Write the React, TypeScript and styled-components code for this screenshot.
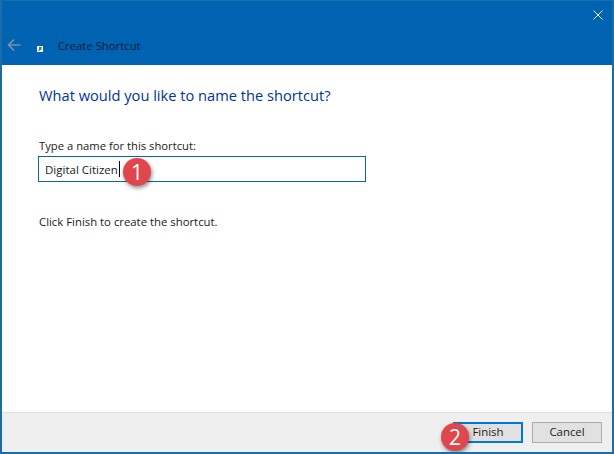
import React from "react";
import styled, { createGlobalStyle } from "styled-components";

const Global = createGlobalStyle`
  html, body { margin: 0; padding: 0; background: #fff; }
  #root { width: 614px; height: 454px; }
`;

const Window = styled.div`
  position: relative;
  box-sizing: border-box;
  width: 614px;
  height: 454px;
  display: flex;
  flex-direction: column;
  border: solid #1a6ea8;
  border-width: 1px 2px 2px 2px;
  font-family: "Open Sans", "Noto Sans", sans-serif;
  font-size: 11px;
  color: #1a1a1a;
  overflow: hidden;
`;

const Header = styled.header`
  height: 64px;
  flex: none;
  background: #0063b1;
  display: flex;
  flex-direction: column;
  justify-content: space-between;
`;

const CloseRow = styled.div`
  display: flex;
  justify-content: flex-end;
  padding: 9px 9px 0 0;
`;

const TitleRow = styled.div`
  display: flex;
  align-items: center;
  height: 20px;
  padding: 0 0 10px 4px;
`;

const BackIcon = styled.svg`
  width: 16px;
  height: 14px;
  flex: none;
`;

const AppIcon = styled.svg`
  width: 6px;
  height: 6px;
  flex: none;
  margin: 8px 0 0 15px;
`;

const Title = styled.span`
  margin-left: 15px;
  font-size: 11.3px;
  color: #0c1a33;
`;

const Body = styled.main`
  flex: 1;
  background: #fff;
  padding: 20px 0 0 37px;
  display: flex;
  flex-direction: column;
`;

const Heading = styled.h1`
  margin: 0;
  font-size: 14.65px;
  font-weight: 400;
  line-height: 20px;
  color: #003399;
`;

const FieldLabel = styled.label`
  margin-top: 33px;
  line-height: 16px;
  font-size: 11.25px;
`;

const NameBox = styled.div`
  box-sizing: border-box;
  width: 328px;
  height: 26px;
  margin: 2px 0 0 -1px;
  border: 1px solid #0b6a94;
  padding-left: 6px;
  display: flex;
  align-items: center;
  font-size: 11.5px;
`;

const Caret = styled.span`
  width: 1px;
  height: 16px;
  margin-left: 1px;
  background: #000;
`;

const Hint = styled.p`
  margin: 32px 0 0;
  line-height: 16px;
  font-size: 11.35px;
`;

const Footer = styled.footer`
  height: 40px;
  flex: none;
  box-sizing: border-box;
  background: #efefef;
  border-top: 1px solid #dfdfdf;
  display: flex;
  justify-content: flex-end;
  align-items: flex-start;
  gap: 9px;
  padding: 9px 10px 0 0;
`;

const Button = styled.button<{ $primary?: boolean }>`
  box-sizing: border-box;
  width: 70px;
  height: 21px;
  padding: 0 0 2px;
  background: #e1e1e1;
  border: ${(p) => (p.$primary ? "2px solid #0078d7" : "1px solid #adadad")};
  font: inherit;
  font-size: 11.4px;
  color: #1a1a1a;
`;

const Badge = styled.div<{ $x: number; $y: number }>`
  position: absolute;
  left: ${(p) => p.$x}px;
  top: ${(p) => p.$y}px;
  width: 28px;
  height: 28px;
  border-radius: 50%;
  background: #e0474c;
  box-shadow: 1px 2px 4px rgba(0, 0, 0, 0.45);
  color: #fff;
  font-family: "Open Sans", sans-serif;
  font-size: 21px;
  line-height: 28px;
  text-align: center;
`;

export default function App() {
  return (
    <>
      <Global />
      <Window>
        <Header>
          <CloseRow>
            <svg width="10" height="10" viewBox="0 0 10 10">
              <path d="M0.5 0.5 L9.5 9.5 M9.5 0.5 L0.5 9.5" stroke="#e8f2fa" strokeWidth="1" fill="none" />
            </svg>
          </CloseRow>
          <TitleRow>
            <BackIcon viewBox="0 0 16 14">
              <path d="M14.5 7 H3 M8 1.5 L2.5 7 L8 12.5" stroke="#7a8fa8" strokeWidth="1.7" fill="none" />
            </BackIcon>
            <AppIcon viewBox="0 0 6 6">
              <rect width="6" height="6" fill="#f4f8fb" />
              <path d="M2 1 H4.5 V3.5 H2 Z" fill="#2a78bd" />
              <path d="M1.5 5 L3.5 3" stroke="#12324f" strokeWidth="1" />
            </AppIcon>
            <Title>Create Shortcut</Title>
          </TitleRow>
        </Header>
        <Body>
          <Heading>What would you like to name the shortcut?</Heading>
          <FieldLabel>Type a name for this shortcut:</FieldLabel>
          <NameBox>
            Digital Citizen
            <Caret />
          </NameBox>
          <Hint>Click Finish to create the shortcut.</Hint>
        </Body>
        <Footer>
          <Button $primary>Finish</Button>
          <Button>Cancel</Button>
        </Footer>
        <Badge $x={121} $y={157}>1</Badge>
        <Badge $x={439} $y={422}>2</Badge>
      </Window>
    </>
  );
}
